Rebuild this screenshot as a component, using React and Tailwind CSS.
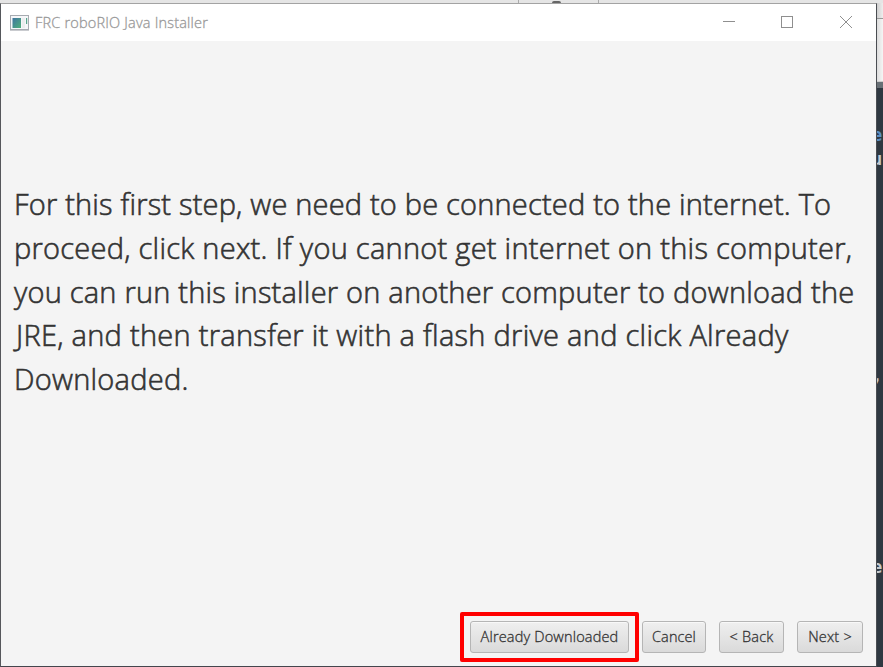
const lines = [
  { text: 'For this first step, we need to be connected to the internet. To', cls: 'tracking-[0.19px]' },
  { text: 'proceed, click next. If you cannot get internet on this computer,', cls: 'tracking-[0.26px]' },
  { text: 'you can run this installer on another computer to download the', cls: 'tracking-[0.21px]' },
  { text: 'JRE, and then transfer it with a flash drive and click Already', cls: 'ml-[2px] tracking-[0.28px]' },
  { text: 'Downloaded.', cls: 'tracking-[0.25px]' },
];

function WizardButton({ className, label, textClass }) {
  return (
    <button
      className={`flex h-8 shrink-0 items-center justify-center whitespace-nowrap rounded-[3px] border border-[#b5b5b5] bg-linear-to-b from-[#efefef] to-[#dadada] pb-px text-[14.5px] text-[#333] shadow-[inset_0_1px_0_#f8f8f8] [-webkit-text-stroke:0.3px] ${className}`}
    >
      <span className={textClass}>{label}</span>
    </button>
  );
}

function AppIcon() {
  return (
    <svg className="h-4 w-[19px] shrink-0" viewBox="0 0 19 16">
      <defs>
        <linearGradient id="screen" x1="0" y1="0" x2="1" y2="1">
          <stop offset="0" stopColor="#3f74a0" />
          <stop offset="1" stopColor="#4fb07a" />
        </linearGradient>
      </defs>
      <rect x="0.5" y="0.5" width="18" height="14" fill="#f6f7f9" stroke="#a7abb1" />
      <rect x="2.5" y="3" width="8.5" height="10" fill="url(#screen)" />
      <rect x="12" y="3" width="3" height="10" fill="#eceeef" />
      <rect x="16" y="3" width="1.2" height="6" fill="#5aa58c" />
      <path d="M0 15.5h19" stroke="#c9cbcf" />
    </svg>
  );
}

function TitleBar() {
  return (
    <header className="flex h-[37px] shrink-0 items-center bg-white pl-[9px]">
      <AppIcon />
      <span className="ml-[6px] flex-1 whitespace-nowrap text-[14.5px] tracking-[0.19px] text-[#999] [-webkit-text-stroke:0.3px]">
        FRC roboRIO Java Installer
      </span>
      <svg className="h-[37px] w-[153px]" viewBox="0 0 153 37" fill="none" stroke="#8f8f8f" shapeRendering="crispEdges">
        <path d="M0 17.5h12" />
        <rect x="58.5" y="12.5" width="11" height="11" />
        <path d="M117 12l12 12M129 12l-12 12" shapeRendering="auto" />
      </svg>
    </header>
  );
}

function EditorEdge() {
  return (
    <aside className="flex w-1.5 shrink-0 flex-col overflow-hidden bg-[#2f3841]">
      <div className="h-4 shrink-0 border-b border-[#999] bg-linear-to-r from-[#cfcfcf] to-[#eee]" />
      <div className="h-[62px] shrink-0 bg-linear-to-r from-[#ddd] to-[#f5f5f5]" />
      <div className="h-[7px] shrink-0 border-t border-[#ccc] bg-[#687076]" />
      <svg className="h-[580px] w-1.5 shrink-0" viewBox="0 0 6 580" fontFamily="DejaVu Sans Mono" fontSize="17" fontWeight="bold">
        <text x="-5" y="53" fill="#5a8fc4">e</text>
        <text x="-5" y="77" fill="#c5cbd0">u</text>
        <text x="-5" y="294" fill="#c5cbd0">,</text>
        <text x="-5" y="485" fill="#c5cbd0">e</text>
      </svg>
    </aside>
  );
}

export default function App() {
  return (
    <div className="flex h-[667px] w-[883px] flex-col overflow-hidden bg-[#e5e5e5] font-['Open_Sans','Noto_Sans',sans-serif] font-light">
      <div className="flex h-[3px] shrink-0 pl-[518px]">
        <div className="flex w-[81px] justify-center border-x border-[#aaa]">
          <div className="mt-px mr-[5px] h-[2px] w-[9px] rounded-t-full bg-[#666]" />
        </div>
      </div>
      <div className="flex min-h-0 flex-1">
        <main className="flex w-[877px] flex-col border border-t-[#a3a3a3] border-r-[#4a4d52] border-b-[#44464d] border-l-[#55575b] bg-[#f4f4f4]">
          <TitleBar />
          <p className="mt-[141px] ml-[13px] flex-1 text-[29px] leading-[43.8px] text-[#333] [-webkit-text-stroke:0.6px]">
            {lines.map((l) => (
              <span key={l.text} className="block whitespace-nowrap">
                <span className={l.cls}>{l.text}</span>
              </span>
            ))}
          </p>
          <footer className="mr-[13px] mb-1 flex items-center justify-end">
            <div className="mr-[3px] flex h-[50px] w-[179px] items-center justify-center rounded-[2px] border-4 border-[#ff0000]">
              <WizardButton className="w-[159px]" label="Already Downloaded" textClass="tracking-[0.17px]" />
            </div>
            <WizardButton className="w-16" label="Cancel" textClass="tracking-[0.1px]" />
            <WizardButton className="ml-[13px] w-[65px]" label="< Back" textClass="tracking-[0.2px]" />
            <WizardButton className="ml-[13px] w-[66px]" label="Next >" textClass="tracking-[0.2px]" />
          </footer>
        </main>
        <EditorEdge />
      </div>
    </div>
  );
}
